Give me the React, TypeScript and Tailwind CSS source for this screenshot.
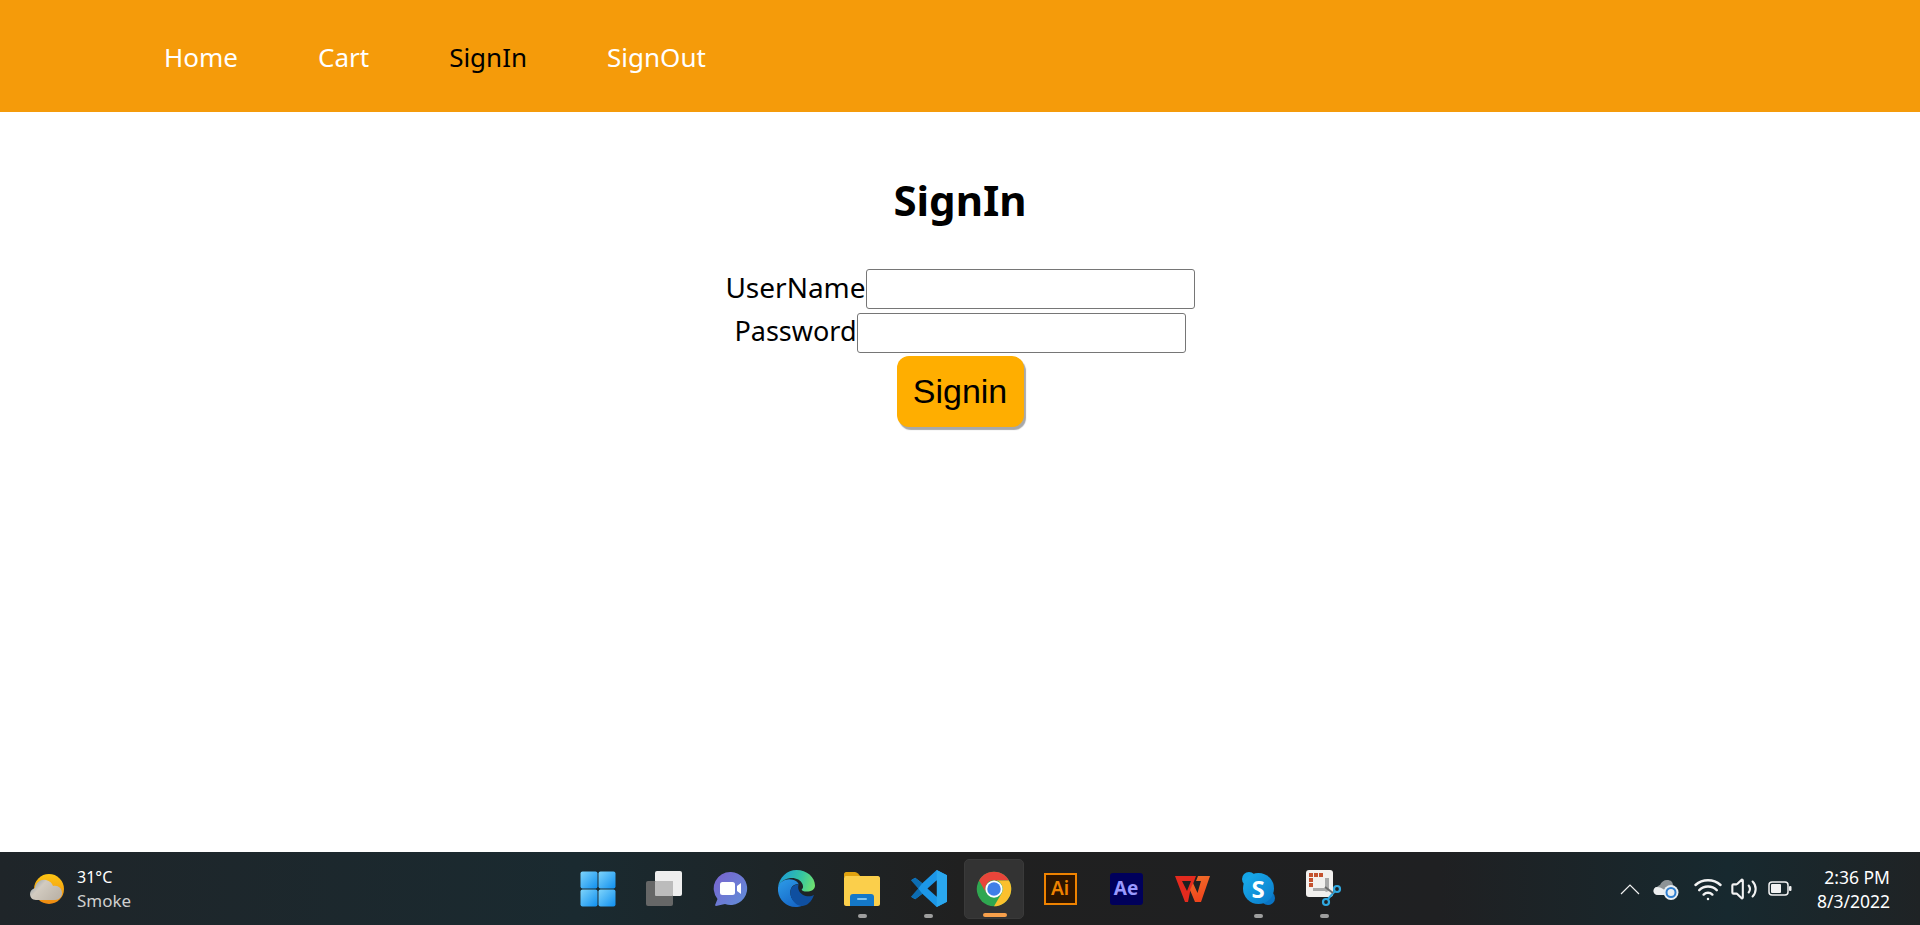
import React from "react";
import { Volume2, Wifi } from "lucide-react";

const uiFont = "font-['Noto_Sans','Open_Sans',sans-serif]";

function Weather() {
  return (
    <svg width="38" height="38" viewBox="0 0 38 38">
      <defs>
        <linearGradient id="sun" x1="0" y1="0" x2="0" y2="1">
          <stop offset="0" stopColor="#fdc513" />
          <stop offset="1" stopColor="#ee8a12" />
        </linearGradient>
        <linearGradient id="cloud" x1="0" y1="0" x2="1" y2="0.6">
          <stop offset="0" stopColor="#7f93a3" />
          <stop offset="0.4" stopColor="#d2cbc0" />
          <stop offset="1" stopColor="#bdb5aa" />
        </linearGradient>
      </defs>
      <circle cx="20" cy="19" r="15" fill="url(#sun)" />
      <path d="M7 30c-4 0-6-3-6-6 0-3 2-5 5-6 1-6 6-9 11-8 4 1 6 3 7 6 5-1 9 2 9 7 0 4-3 7-7 7z" fill="url(#cloud)" />
    </svg>
  );
}

function Start() {
  return (
    <svg width="36" height="36" viewBox="0 0 36 36">
      <defs>
        <linearGradient id="win" x1="0" y1="0" x2="1" y2="1">
          <stop offset="0" stopColor="#7ed4fb" />
          <stop offset="1" stopColor="#0f8fef" />
        </linearGradient>
      </defs>
      <rect x="0.5" y="0.5" width="17" height="17" rx="2" fill="url(#win)" />
      <rect x="18.5" y="0.5" width="17" height="17" rx="2" fill="url(#win)" />
      <rect x="0.5" y="18.5" width="17" height="17" rx="2" fill="url(#win)" />
      <rect x="18.5" y="18.5" width="17" height="17" rx="2" fill="url(#win)" />
    </svg>
  );
}

function TaskView() {
  return (
    <svg width="38" height="36" viewBox="0 0 38 36">
      <rect x="10" y="0" width="27" height="25" rx="2" fill="#eeeeee" />
      <rect x="1" y="10" width="27" height="25" rx="2" fill="#6a6a6a" fillOpacity="0.95" />
      <rect x="10" y="10" width="18" height="15" rx="1" fill="#bcbcbc" />
    </svg>
  );
}

function Chat() {
  return (
    <svg width="36" height="36" viewBox="0 0 36 36">
      <defs>
        <linearGradient id="chat" x1="0" y1="0" x2="1" y2="1">
          <stop offset="0" stopColor="#7a62cf" />
          <stop offset="1" stopColor="#5f8fd8" />
        </linearGradient>
      </defs>
      <path d="M19 1a16.500 16.500 0 1 1-6 32l-9 2c-1 0-1-1-.500-2l2-5A16.500 16.500 0 0 1 19 1z" fill="url(#chat)" />
      <rect x="8" y="11" width="15" height="13" rx="2.500" fill="#ffffff" />
      <path d="M25 15l4-3v11l-4-3z" fill="#ffffff" />
    </svg>
  );
}

function Edge() {
  return (
    <svg width="37" height="37" viewBox="0 0 36 36">
      <defs>
        <linearGradient id="edgeTop" x1="0" y1="0.4" x2="1" y2="0.6">
          <stop offset="0" stopColor="#1a9ad8" />
          <stop offset="0.6" stopColor="#36c6a0" />
          <stop offset="1" stopColor="#6fe070" />
        </linearGradient>
        <linearGradient id="edgeBody" x1="0" y1="0" x2="0.6" y2="1">
          <stop offset="0" stopColor="#2d9ce8" />
          <stop offset="1" stopColor="#1668c8" />
        </linearGradient>
      </defs>
      <path d="M0 17C1 7 9 0 18 0c10 0 18 7 18 15 0 4-4 6-8 6-3 0-5-1-5-2 1-1 2-2 1-5-2-5-8-7-13-6C5 9 1 13 0 17z" fill="url(#edgeTop)" />
      <path d="M0 17c1-5 6-8 11-8s9 3 9 5c-5-1-8 3-8 8 0 7 6 12 13 12-4 2-6 2-8 2C7 36-1 27 0 17z" fill="url(#edgeBody)" />
      <path d="M12 22c0-5 3-8 8-8-1 4 0 7 4 10 4 2 8 2 11 0-2 7-7 11-12 11-6 0-11-7-11-13z" fill="#0f4fa0" />
    </svg>
  );
}

function Explorer() {
  return (
    <svg width="38" height="36" viewBox="0 0 38 36">
      <path d="M1 3c0-1 1-2 2-2h9c1 0 2 .500 3 1.500L18 6H1z" fill="#e0a20f" />
      <path d="M1 7c0-1 1-2 2-2h32c1 0 2 1 2 2v26c0 1-1 2-2 2H3c-1 0-2-1-2-2z" fill="#fbcf4b" />
      <path d="M7 35V26c0-2 1-3 3-3h18c2 0 3 1 3 3v9z" fill="#1478c8" />
      <rect x="14" y="27" width="10" height="2" rx="1" fill="#7fc4f0" />
    </svg>
  );
}

function VsCode() {
  return (
    <svg width="37" height="37" viewBox="0 0 36 36">
      <path d="M26 0l10 5v26l-10 5-14-13-7 5.500L1 26V10l4-2.500L12 13z" fill="#1c97e8" />
      <path d="M26 0l10 5v26l-10 5z" fill="#2aa7ee" />
      <path d="M26 10l-9 8 9 8z" fill="#1d1f22" />
      <path d="M1 10l4-2.500L12 13l-4 5z M8 18l4 5-7 5.500L1 26z" fill="#0c6db4" />
      <path d="M1 10l7 8-7 8z" fill="#1d1f22" />
    </svg>
  );
}

function Chrome() {
  return (
    <svg width="36" height="36" viewBox="0 0 48 48">
      <circle cx="24" cy="24" r="23" fill="#2fa750" />
      <path d="M43.900 12.500H24A11.500 11.500 0 0 0 14 30L4.100 12.500A23 23 0 0 1 43.900 12.500z" fill="#e8453a" />
      <path d="M43.900 12.500H24A11.500 11.500 0 0 1 34 30L24 47A23 23 0 0 0 43.900 12.500z" fill="#fbc02d" />
      <circle cx="24" cy="24" r="11.500" fill="#ffffff" />
      <circle cx="24" cy="24" r="9" fill="#3f7fe8" />
    </svg>
  );
}

function Illustrator() {
  return (
    <div className="flex h-[32px] w-[33px] items-center justify-center border-[2px] border-[#f08300] bg-[#2d1500] text-[19px] font-semibold leading-none text-[#f08300] font-['Noto_Sans',sans-serif]">
      Ai
    </div>
  );
}

function AfterEffects() {
  return (
    <div className="flex h-[32px] w-[33px] items-center justify-center rounded-[3px] bg-[#00005b] text-[19px] font-bold leading-none text-[#9999ff] font-['Noto_Sans',sans-serif]">
      Ae
    </div>
  );
}

function Wps() {
  return (
    <svg width="36" height="28" viewBox="0 0 36 28">
      <defs>
        <linearGradient id="wps" x1="0" y1="0" x2="0.3" y2="1">
          <stop offset="0" stopColor="#f0702a" />
          <stop offset="1" stopColor="#f0441c" />
        </linearGradient>
      </defs>
      <path fillRule="evenodd" d="M1 1h21L16 17l-2 10h-3zM8 6h9l-4 10z" fill="#e42a1e" />
      <path d="M24 1h12l-9 26h-6l-5-12 3-7 4.500 10L27 6h-5z" fill="url(#wps)" />
    </svg>
  );
}

function Skype() {
  return (
    <div className="relative flex h-[33px] w-[33px] items-center justify-center">
      <div className="absolute left-0 top-0 h-[14px] w-[14px] rounded-full bg-[#14a4e6]" />
      <div className="absolute bottom-0 right-0 h-[14px] w-[14px] rounded-full bg-[#0a74c4]" />
      <div className="absolute inset-[1px] rounded-full bg-[linear-gradient(135deg,#1ab0ee,#0a78c8)]" />
      <span className="relative text-[24px] font-bold leading-none text-white font-['Noto_Sans',sans-serif]">S</span>
    </div>
  );
}

function Snip() {
  return (
    <svg width="38" height="38" viewBox="0 0 38 38">
      <rect x="1" y="0" width="27" height="27" rx="3" fill="#f2f0ee" />
      <g fill="#c4512e">
        <rect x="4" y="3" width="4" height="4" />
        <rect x="9" y="3" width="4" height="4" />
        <rect x="14" y="3" width="4" height="4" />
        <rect x="4" y="8" width="4" height="4" />
        <rect x="4" y="13" width="4" height="4" />
      </g>
      <path d="M20 8v10H8v3h12l1 1 3-1V8z" fill="#a8a8a8" />
      <circle cx="32" cy="19" r="3" fill="none" stroke="#2fa8e0" strokeWidth="2.200" />
      <circle cx="21" cy="32" r="3" fill="none" stroke="#2fa8e0" strokeWidth="2.200" />
      <path d="M23 29L30 21" stroke="#2fa8e0" strokeWidth="2" />
      <path d="M20 17l8 6" stroke="#6c6c6c" strokeWidth="2" />
    </svg>
  );
}

function Chevron() {
  return (
    <svg width="20" height="12" viewBox="0 0 20 12">
      <path d="M1 11L10 2l9 9" fill="none" stroke="#f2f2f2" strokeWidth="1.200" />
    </svg>
  );
}

function OneDrive() {
  return (
    <svg width="26" height="22" viewBox="0 0 26 22">
      <path d="M5 17c-3 0-4.500-2-4.500-4S2 9 4 9c1-1 2-2 3-2 1-3 4-5 7-5 4 0 6 2 6 6 1 0 3 1 3 3v6z" fill="#8d9396" />
      <path d="M5 17c-3 0-4.500-2-4.500-4S2 9 4 9c4 0 9 3 12 8z" fill="#eceeef" />
      <circle cx="18" cy="14.500" r="7.500" fill="#e8eef2" />
      <circle cx="18" cy="14.500" r="4.500" fill="none" stroke="#2f7fd0" strokeWidth="2" />
    </svg>
  );
}

function Battery() {
  return (
    <svg width="24" height="15" viewBox="0 0 24 15">
      <rect x="1" y="1" width="19" height="13" rx="3" fill="none" stroke="#f2f2f2" strokeWidth="1.500" />
      <rect x="3" y="3" width="10" height="9" rx="1" fill="#f2f2f2" />
      <rect x="21" y="5" width="2.500" height="5" rx="1" fill="#f2f2f2" />
    </svg>
  );
}

function AppSlot({ children, dot, active }: { children: React.ReactNode; dot?: boolean; active?: boolean }) {
  return (
    <div className={active ? "relative flex h-[60px] w-[60px] items-center justify-center rounded-[5px] border border-[#3a3a3a] bg-[#333333]" : "relative flex h-[60px] w-[60px] items-center justify-center"}>
      {children}
      {dot && <span className="absolute bottom-[1px] left-[26px] h-[4px] w-[9px] rounded-full bg-[#9e9e9e]" />}
      {active && <span className="absolute bottom-[1px] left-[18px] h-[4px] w-[24px] rounded-full bg-[#f7a04b]" />}
    </div>
  );
}

export default function App() {
  return (
    <div className="flex h-[925px] flex-col bg-white">
      <nav className={`flex h-[112px] items-center gap-[80px] bg-[#f59b0a] pl-[164px] pt-[2px] text-[26px] text-white ${uiFont}`}>
        <a>Home</a>
        <a>Cart</a>
        <a className="text-black">SignIn</a>
        <a>SignOut</a>
      </nav>

      <main className={`flex-1 pt-[60px] text-center text-[27.5px] text-black ${uiFont}`}>
        <h1 className="mb-[40px] text-[42px] font-bold leading-[55px]">SignIn</h1>
        <div className="flex h-[44px] items-center justify-center">
          <label className="mb-[4px] text-[28px]">UserName</label>
          <input type="text" className="h-[40px] w-[329px] rounded-[3px] border border-[#767676] bg-white" />
        </div>
        <div className="flex h-[44px] items-center justify-center">
          <label className="mb-[4px] text-[27px]">Password</label>
          <input type="password" className="h-[40px] w-[329px] rounded-[3px] border border-[#767676] bg-white" />
        </div>
        <button className="mt-[1px] h-[71px] w-[127px] rounded-[12px] bg-[#ffae00] text-[34px] text-black shadow-[2px_3px_1px_#a8a8a8] font-['Liberation_Sans',sans-serif]">
          Signin
        </button>
      </main>

      <footer className={`grid h-[73px] grid-cols-[1fr_auto_1fr] items-center bg-[linear-gradient(90deg,#1f2529_0%,#1a2a30_30%,#202020_50%,#1f2022_75%,#17292f_90%,#1f2325_100%)] text-white ${uiFont}`}>
        <div className="flex items-center gap-[10px] pl-[29px]">
          <Weather />
          <div className="leading-[24px]">
            <div className="text-[16px]">31°C</div>
            <div className="text-[17px] text-[#cfcfcf]">Smoke</div>
          </div>
        </div>

        <div className="ml-[2px] flex items-center gap-[6px]">
          <AppSlot><Start /></AppSlot>
          <AppSlot><TaskView /></AppSlot>
          <AppSlot><Chat /></AppSlot>
          <AppSlot><Edge /></AppSlot>
          <AppSlot dot><Explorer /></AppSlot>
          <AppSlot dot><VsCode /></AppSlot>
          <AppSlot active><Chrome /></AppSlot>
          <AppSlot><Illustrator /></AppSlot>
          <AppSlot><AfterEffects /></AppSlot>
          <AppSlot><Wps /></AppSlot>
          <AppSlot dot><Skype /></AppSlot>
          <AppSlot dot><Snip /></AppSlot>
        </div>

        <div className="flex items-center justify-end pr-[30px]">
          <Chevron />
          <div className="ml-[13px]"><OneDrive /></div>
          <Wifi size={30} strokeWidth={2} className="ml-[14px] text-[#f2f2f2]" />
          <Volume2 size={28} strokeWidth={1.8} className="ml-[7px] text-[#f2f2f2]" />
          <div className="ml-[10px]"><Battery /></div>
          <div className="ml-[25px] text-right text-[17.5px] leading-[24px]">
            <div>2:36 PM</div>
            <div>8/3/2022</div>
          </div>
        </div>
      </footer>
    </div>
  );
}
